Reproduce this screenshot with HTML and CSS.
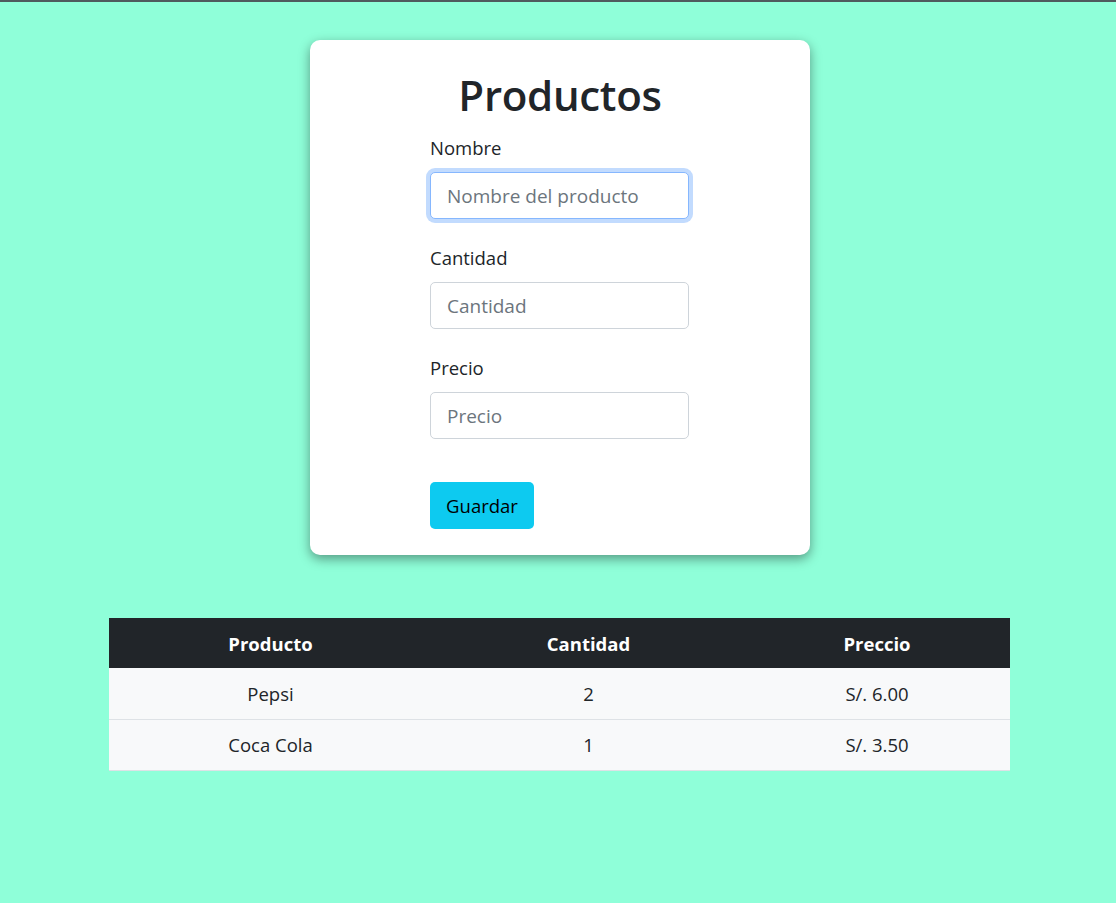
FILE: index.html
```html
<!DOCTYPE html>
<html lang="es">
<head>
<meta charset="utf-8">
<title>Productos</title>
<link rel="stylesheet" href="styles.css">
</head>
<body>
<div class="topline"></div>
<main class="page">
  <section class="card">
    <h1 class="title">Productos</h1>
    <form class="form">
      <div class="group">
        <label class="label" for="nombre">Nombre</label>
        <input class="input focused" id="nombre" type="text" placeholder="Nombre del producto">
      </div>
      <div class="group">
        <label class="label" for="cantidad">Cantidad</label>
        <input class="input" id="cantidad" type="text" placeholder="Cantidad">
      </div>
      <div class="group">
        <label class="label" for="precio">Precio</label>
        <input class="input" id="precio" type="text" placeholder="Precio">
      </div>
      <button class="btn" type="button">Guardar</button>
    </form>
  </section>

  <table class="table">
    <colgroup>
      <col class="c1"><col class="c2"><col class="c3">
    </colgroup>
    <thead>
      <tr><th>Producto</th><th>Cantidad</th><th>Preccio</th></tr>
    </thead>
    <tbody>
      <tr><td>Pepsi</td><td>2</td><td>S/. 6.00</td></tr>
      <tr><td>Coca Cola</td><td>1</td><td>S/. 3.50</td></tr>
    </tbody>
  </table>
</main>
</body>
</html>
```
FILE: styles.css
```css
* { box-sizing: border-box; }
html, body { margin: 0; padding: 0; }
body {
  background: #8fffd9;
  font-family: "Open Sans", "Noto Sans", "Liberation Sans", sans-serif;
  color: #212529;
  min-height: 903px;
}
.topline { height: 2px; background: #4f5b5e; }
.page {
  display: flex;
  flex-direction: column;
  align-items: center;
  padding-top: 38px;
  padding-left: 4px;
}
.card {
  width: 500px;
  height: 515px;
  background: #fff;
  border-radius: 10px;
  box-shadow: 0 4px 12px rgba(0, 0, 0, 0.4);
  display: flex;
  flex-direction: column;
  align-items: center;
  padding-top: 31px;
}
.title {
  margin: 0 0 14px;
  font-size: 42px;
  font-weight: 600;
  line-height: 48px;
  letter-spacing: -0.3px;
  color: #212529;
}
.form {
  width: 260px;
  display: flex;
  flex-direction: column;
}
.group { display: flex; flex-direction: column; margin-bottom: 24px; }
.label {
  font-size: 18.5px;
  line-height: 30px;
  margin-bottom: 9px;
  color: #212529;
}
.input {
  width: 259px;
  height: 47px;
  border: 1px solid #ced4da;
  border-radius: 5px;
  padding: 0 16px;
  font-family: inherit;
  font-size: 19px;
  color: #212529;
  background: #fff;
  outline: none;
}
.input::placeholder { color: #6c757d; }
.input.focused {
  border-color: #86b7fe;
  box-shadow: 0 0 0 4px rgba(13, 110, 253, 0.25);
}
.btn {
  align-self: flex-start;
  margin-top: 19px;
  width: 104px;
  height: 47px;
  border: 0;
  border-radius: 5px;
  background: #0dcaf0;
  color: #000;
  font-family: inherit;
  font-size: 18.5px;
  padding: 0;
}
.table {
  margin-top: 63px;
  margin-right: 2px;
  width: 901px;
  border-collapse: collapse;
  font-size: 18.5px;
}
.c1 { width: 324px; }
.c2 { width: 312px; }
.c3 { width: 265px; }
.table th {
  background: #212529;
  color: #fff;
  font-weight: 700;
  height: 50px;
  padding: 0;
  text-align: center;
}
.table td {
  background: #f8f9fa;
  height: 51px;
  padding: 0;
  text-align: center;
  border-bottom: 1px solid #dee2e6;
  color: #212529;
}
```
